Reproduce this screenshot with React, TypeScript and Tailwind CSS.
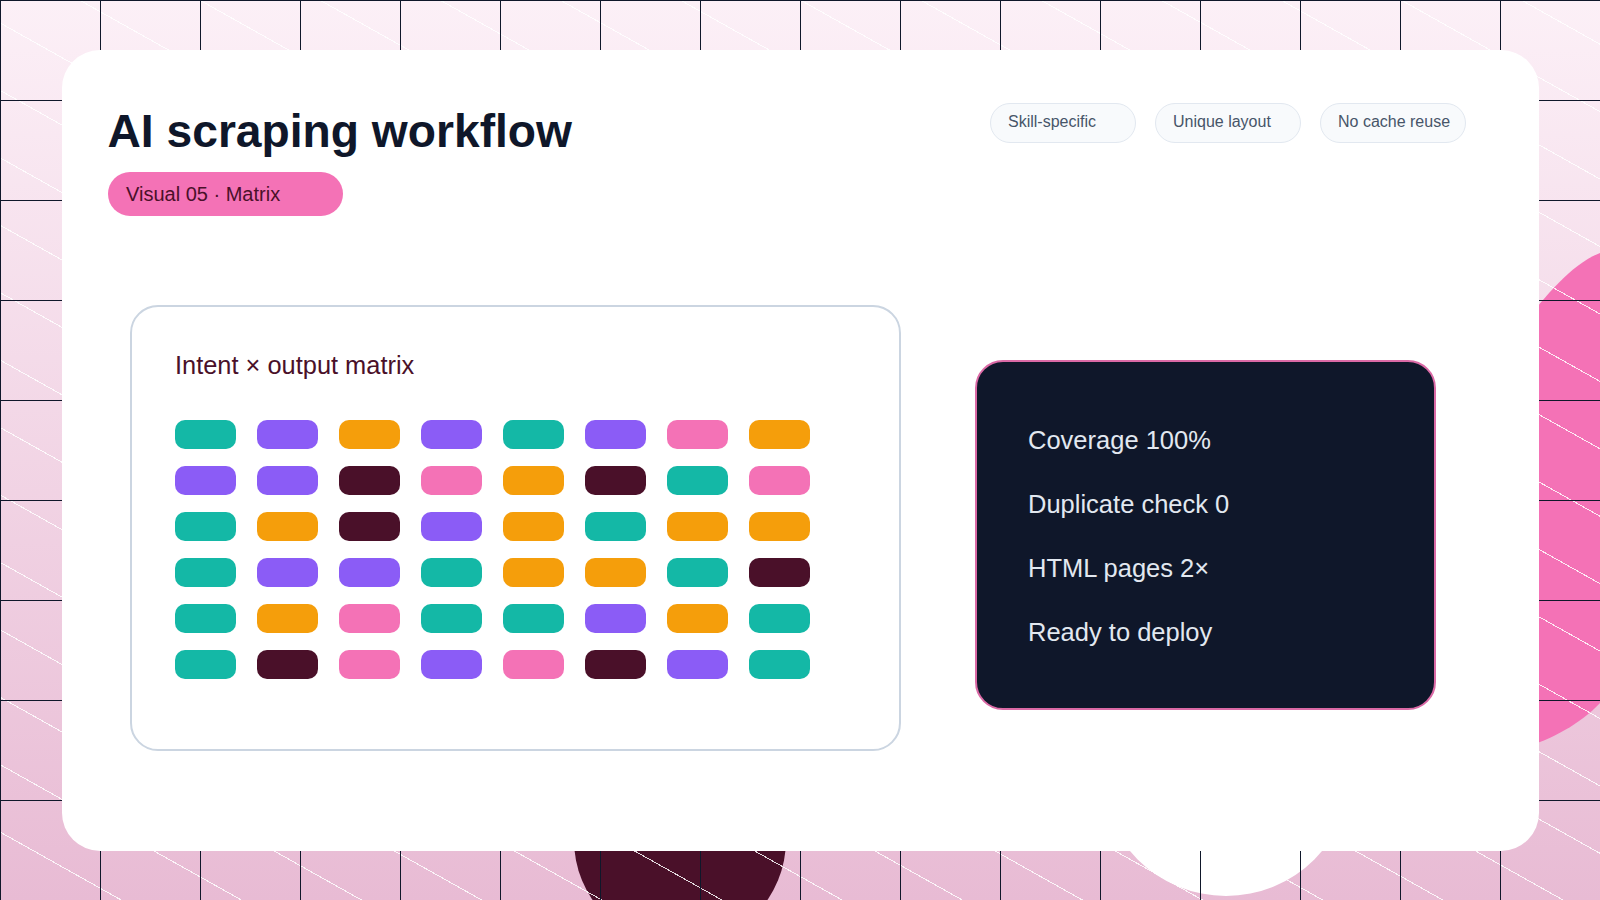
const INK = 'bg-[#4a1029]';
const TEAL = 'bg-[#14b8a6]';
const VIOLET = 'bg-[#8b5cf6]';
const AMBER = 'bg-[#f59e0b]';
const PINK = 'bg-[#f472b6]';

const matrix = [
  [TEAL, VIOLET, AMBER, VIOLET, TEAL, VIOLET, PINK, AMBER],
  [VIOLET, VIOLET, INK, PINK, AMBER, INK, TEAL, PINK],
  [TEAL, AMBER, INK, VIOLET, AMBER, TEAL, AMBER, AMBER],
  [TEAL, VIOLET, VIOLET, TEAL, AMBER, AMBER, TEAL, INK],
  [TEAL, AMBER, PINK, TEAL, TEAL, VIOLET, AMBER, TEAL],
  [TEAL, INK, PINK, VIOLET, PINK, INK, VIOLET, TEAL],
];

const chips = ['Skill-specific', 'Unique layout', 'No cache reuse'];
const stats = ['Coverage 100%', 'Duplicate check 0', 'HTML pages 2×', 'Ready to deploy'];

export default function App() {
  return (
    <div className="relative w-[1600px] h-[900px] overflow-hidden bg-[linear-gradient(180deg,#fcf0f7,#e8bbd4)] font-['Liberation_Sans',Arial,sans-serif]">
      {/* backdrop shapes */}
      <svg className="absolute left-0 top-0" width="1600" height="900" viewBox="0 0 1600 900">
        <path d="M1500 360C1515 335 1560 268 1600 253V703C1575 730 1530 750 1500 752Z" fill="#f472b6" />
      </svg>
      <div className="absolute left-[574px] top-[734px] w-[212px] h-[212px] rounded-full bg-[#4a1029]" />
      <div className="absolute left-[1101px] top-[646px] w-[250px] h-[250px] rounded-full bg-white" />
      <div className="absolute inset-0 bg-[repeating-linear-gradient(29.3deg,#ffffffd9_0px,#ffffffd9_1px,transparent_1px,transparent_58.8px)]" />
      <div className="absolute inset-0 bg-[linear-gradient(#0f172a_1px,transparent_1px),linear-gradient(90deg,#0f172a_1px,transparent_1px)] bg-[size:100px_100px]" />

      <div className="relative pl-[62px] pt-[50px]">
        <div className="w-[1477px] h-[801px] rounded-[38px] bg-white pt-[52px] pl-[46px] pr-[73px]">
          <header className="flex justify-between items-start">
            <div>
              <h1 className="pt-[1px] -ml-[0.5px] text-[46.2px] leading-[56px] font-bold text-[#0f172a]">AI scraping workflow</h1>
              <div className="mt-[13px] w-[235px] h-[44px] rounded-full bg-[#f472b6] pl-[18px] text-[20px] leading-[44px] text-[#4a1029]">
                Visual 05 · Matrix
              </div>
            </div>
            <div className="flex gap-[19px] pt-[1px]">
              {chips.map((chip) => (
                <div
                  key={chip}
                  className="w-[146px] h-[40px] rounded-[20px] border border-[#e2e8f0] bg-[#f8fafc] pl-[17px] text-[16px] leading-[35px] text-[#475569]"
                >
                  {chip}
                </div>
              ))}
            </div>
          </header>

          <main className="flex items-start pl-[22px] mt-[89px]">
            <section className="w-[771px] h-[446px] rounded-[28px] border-2 border-[#cbd5e1] pl-[43px] pt-[40px]">
              <h2 className="text-[25.4px] leading-[36px] font-normal text-[#4a1029]">Intent × output matrix</h2>
              <div className="mt-[37px] grid grid-cols-[repeat(8,61px)] gap-x-[21px] gap-y-[17px]">
                {matrix.flat().map((color, i) => (
                  <div key={i} className={`h-[29px] rounded-[10px] ${color}`} />
                ))}
              </div>
            </section>

            <section className="ml-[74px] mt-[55px] w-[461px] h-[350px] rounded-[28px] border-2 border-[#db6aa6] bg-[#0f172a] pl-[51px] pt-[46px] text-[25.5px] leading-[64px] text-[#e2e8f0]">
              {stats.map((s) => (
                <div key={s}>{s}</div>
              ))}
            </section>
          </main>
        </div>
      </div>
    </div>
  );
}
